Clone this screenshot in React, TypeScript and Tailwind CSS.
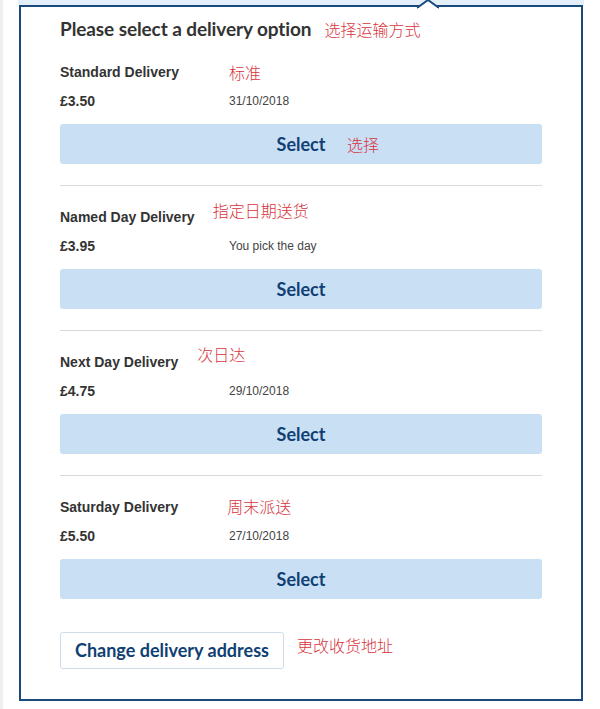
import React from 'react';

const options = [
  { name: 'Standard Delivery', price: '£3.50', detail: '31/10/2018', note: '标准', noteClass: 'ml-[50px]', btnNote: '选择' },
  { name: 'Named Day Delivery', price: '£3.95', detail: 'You pick the day', note: '指定日期送货', noteClass: 'ml-[18px] -mt-[14px]' },
  { name: 'Next Day Delivery', price: '£4.75', detail: '29/10/2018', note: '次日达', noteClass: 'ml-[19px] -mt-[16px]' },
  { name: 'Saturday Delivery', price: '£5.50', detail: '27/10/2018', note: '周末派送', noteClass: 'ml-[49px] -mt-[2px]' },
];

const note = "text-[#d8333c] text-[16px] font-['Noto_Sans_CJK_SC',sans-serif] font-light leading-none";

export default function App() {
  return (
    <div className="min-h-[709px] bg-white border-l-[3px] border-[#efefef] font-['Liberation_Sans',Arial,sans-serif]">
      <div className="w-[566px] ml-[15px] h-[5px] bg-[#e2eef9]" />
      <div className="relative ml-[16px] w-[564px] h-[696px] border-2 border-[#184a7b] bg-white px-[39px]">
        <svg className="absolute -top-[7px] left-[396px]" width="22" height="9" viewBox="0 0 22 9">
          <path d="M0 8 L11 0 L22 8" fill="white" stroke="#184a7b" strokeWidth="2" />
          <rect x="1" y="8" width="20" height="1" fill="white" />
        </svg>

        <div className="flex items-center h-[26px] mt-[9px]">
          <h2 className="font-['Lato',sans-serif] font-bold text-[19px] tracking-[-0.1px] text-[#333]">Please select a delivery option</h2>
          <span className={`${note} ml-[13px]`}>选择运输方式</span>
        </div>

        {options.map((o, i) => (
          <div key={o.name}>
            {i > 0 && <div className="h-px bg-[#d9d9d9] mt-[21px]" />}
            <div className={`flex items-center h-[20px] ${i === 0 ? 'mt-[20px]' : 'mt-[21px]'}`}>
              <span className="text-[14px] font-bold text-[#333]">{o.name}</span>
              <span className={`${note} ${o.noteClass}`}>{o.note}</span>
            </div>
            <div className="flex items-center h-[20px] mt-[9px]">
              <span className="w-[169px] text-[14px] font-bold text-[#333]">{o.price}</span>
              <span className="text-[12px] text-[#444]">{o.detail}</span>
            </div>
            <button className="relative mt-[13px] w-full h-[40px] rounded-[3px] bg-[#c9dff4] flex items-center justify-center">
              <span className="font-['Lato',sans-serif] font-bold text-[18px] text-[#103f74]">Select</span>
              {o.btnNote && <span className={`${note} absolute left-[287px]`}>{o.btnNote}</span>}
            </button>
          </div>
        ))}

        <div className="flex items-center mt-[33px]">
          <button className="h-[37px] px-[14px] border border-[#cfdcea] rounded-[3px] bg-white font-['Lato',sans-serif] font-bold text-[18px] text-[#103f74]">
            Change delivery address
          </button>
          <span className={`${note} ml-[13px] -mt-[11px]`}>更改收货地址</span>
        </div>
      </div>
    </div>
  );
}
